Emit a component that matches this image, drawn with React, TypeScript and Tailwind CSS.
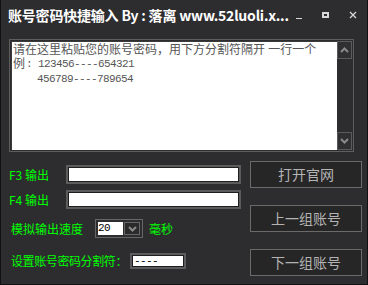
import React from "react";

const cjk = { fontFamily: '"Noto Sans CJK SC", sans-serif' };
const body = { fontFamily: '"Liberation Sans", "Noto Sans CJK SC", sans-serif' };
const mono = { fontFamily: '"Liberation Mono", "Noto Sans CJK SC", monospace' };

const Chevron = ({ up = false }: { up?: boolean }) => (
  <svg width="9" height="6" viewBox="0 0 9 6">
    <path
      d={up ? "M1 5 L4.5 1.5 L8 5" : "M1 1 L4.5 4.5 L8 1"}
      fill="none"
      stroke="#8a8a8a"
      strokeWidth="2"
    />
  </svg>
);

const Field = ({ w, value = "" }: { w: string; value?: string }) => (
  <div className={`${w} h-full shrink-0 border-2 border-[#5c5c5c] bg-white flex items-center`}>
    <div
      className="h-full w-full border border-[#1e1e1e] bg-white px-[1px] text-[11px] tracking-[-0.6px] leading-none text-black flex items-center"
      style={mono}
    >
      {value}
    </div>
  </div>
);

const Button = ({ label }: { label: string }) => (
  <div
    className="h-[27px] w-[112px] border border-[#6a6a6a] bg-[#262626] text-[#b4b4b4] text-[14px] flex items-center justify-center"
    style={cjk}
  >
    {label}
  </div>
);

const App = () => {
  return (
    <div className="w-[368px] h-[285px] bg-[#2d2d30] border border-[#111] border-t-0 flex flex-col overflow-hidden">
      <div className="h-[30px] flex items-center justify-between pl-[7px] pr-[10px]">
        <span className="text-white text-[14px] font-bold tracking-[-0.2px] whitespace-nowrap" style={cjk}>
          账号密码快捷输入 By : 落离 www.52luoli.x...
        </span>
        <div className="flex items-center gap-[20px] text-[#d8d8d8]">
          <div className="w-[6px] h-[1px] bg-[#d8d8d8] mt-[6px]" />
          <div className="w-[7px] h-[6px] border-2 border-[#d8d8d8]" />
          <svg width="8" height="8" viewBox="0 0 8 8">
            <path d="M1 1 L7 7 M7 1 L1 7" stroke="#d8d8d8" strokeWidth="1.3" />
          </svg>
        </div>
      </div>

      <div className="mt-[9px] ml-[8px] w-[345px] h-[113px] border border-[#5e5e5e] p-[1px] flex">
        <div
          className="flex-1 bg-white border-t border-l border-[#3a3a3a] pl-[1px] pt-[1px] text-[#555] text-[12px]"
          style={body}
        >
          <div className="h-[14px] leading-[14px] whitespace-nowrap">请在这里粘贴您的账号密码，用下方分割符隔开 一行一个</div>
          <div className="h-[14px] leading-[14px] whitespace-nowrap flex">
            <span>例</span>
            <span className="ml-[1px] text-[11px] tracking-[-0.6px] leading-[14px]" style={mono}>
              : 123456----654321
            </span>
          </div>
          <div className="h-[14px] leading-[14px] whitespace-nowrap pl-[24px]">
            <span className="text-[11px] tracking-[-0.6px] leading-[14px]" style={mono}>
              456789----789654
            </span>
          </div>
        </div>
        <div className="w-[15px] bg-[#2d2d30] flex flex-col justify-between">
          <div className="h-[18px] border border-[#5a5a5a] bg-[#303033] flex items-center justify-center">
            <Chevron up />
          </div>
          <div className="h-[18px] border border-[#5a5a5a] bg-[#303033] flex items-center justify-center">
            <Chevron />
          </div>
        </div>
      </div>

      <div className="flex pl-[8px]">
        <div className="w-[241px] flex flex-col text-[#00ff00] text-[12px]" style={cjk}>
          <div className="mt-[13px] h-[19px] flex items-center">
            <span className="w-[57px] shrink-0 whitespace-nowrap">F3 输出</span>
            <Field w="w-[175px]" />
          </div>
          <div className="mt-[6px] h-[19px] flex items-center">
            <span className="w-[57px] shrink-0 whitespace-nowrap">F4 输出</span>
            <Field w="w-[175px]" />
          </div>
          <div className="mt-[10px] h-[19px] flex items-center pl-[2px]">
            <span className="w-[84px] shrink-0 whitespace-nowrap">模拟输出速度</span>
            <div className="h-[19px] w-[48px] shrink-0 border border-[#666] flex items-center p-[2px] gap-[1px]">
              <div
                className="h-full w-[25px] bg-white text-black text-[11px] tracking-[-0.6px] leading-none flex items-center"
                style={mono}
              >
                20
              </div>
              <div className="h-full flex-1 border border-[#666] bg-[#2a2a2a] flex items-center justify-center">
                <Chevron />
              </div>
            </div>
            <span className="ml-[6px] whitespace-nowrap">毫秒</span>
          </div>
          <div className="mt-[15px] h-[16px] flex items-center pl-[2px]">
            <span className="w-[119px] shrink-0 whitespace-nowrap tracking-[-0.4px]">设置账号密码分割符：</span>
            <Field w="w-[56px]" value="----" />
          </div>
        </div>
        <div className="flex flex-col gap-[17px] mt-[9px]">
          <Button label="打开官网" />
          <Button label="上一组账号" />
          <Button label="下一组账号" />
        </div>
      </div>
    </div>
  );
};

export default App;
